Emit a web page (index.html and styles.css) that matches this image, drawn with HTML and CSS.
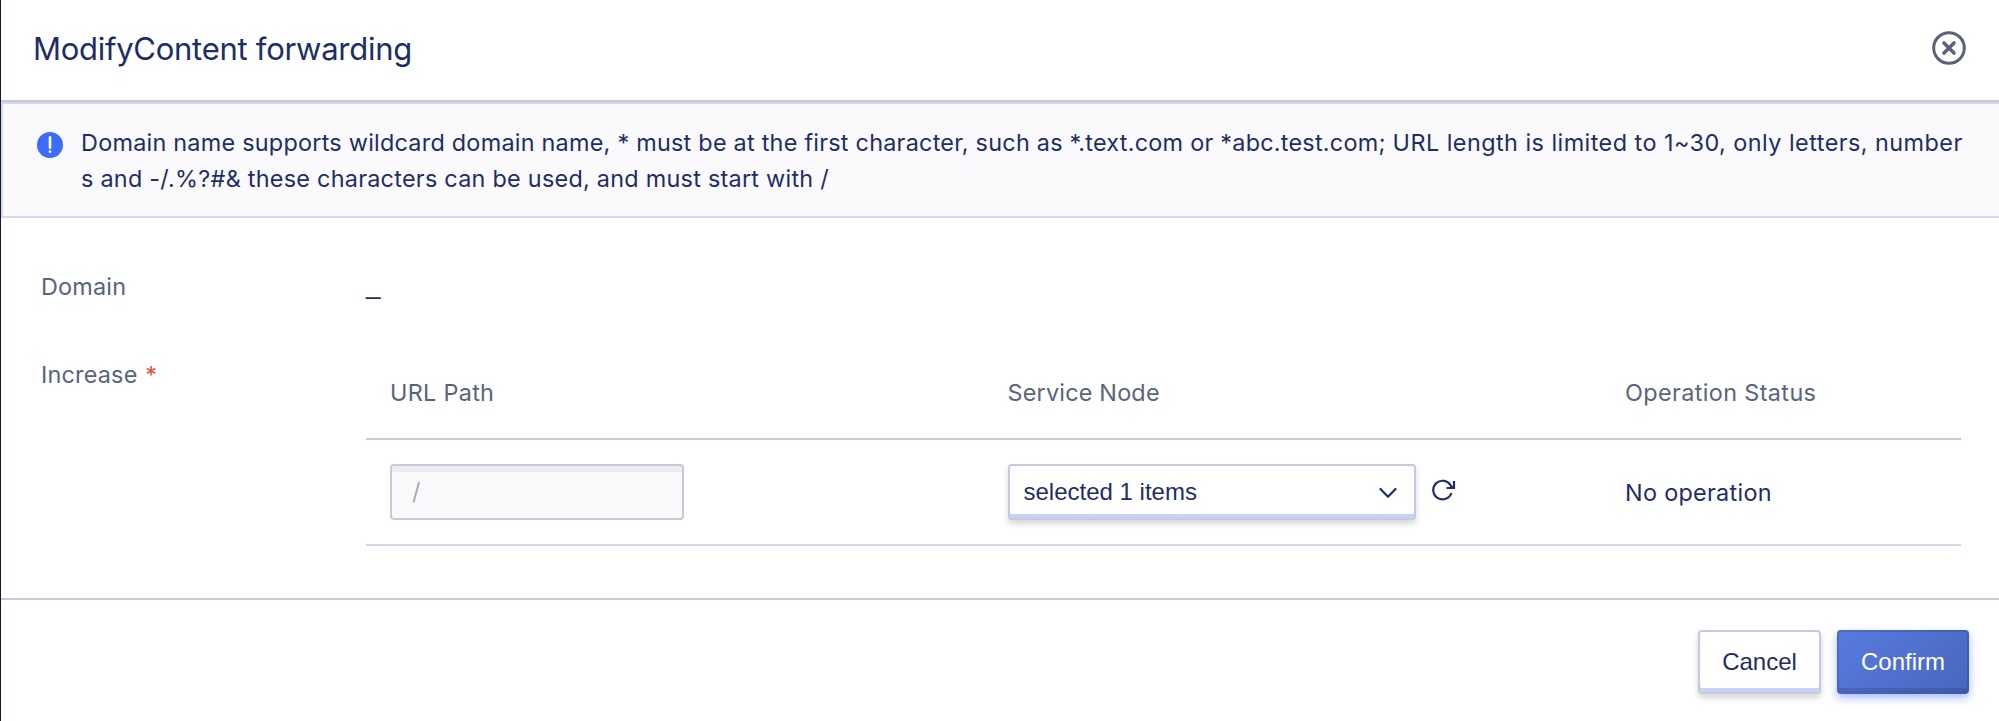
FILE: index.html
```html
<!DOCTYPE html>
<html lang="en">
<head>
<meta charset="utf-8">
<title>Modify content forwarding</title>
<link rel="stylesheet" href="styles.css">
</head>
<body>
<section class="dialog">
  <header class="dialog-header">
    <h1 class="title">ModifyContent forwarding</h1>
    <svg class="close" viewBox="0 0 34 34"><circle cx="17" cy="17" r="15.3"/><path d="M12 12l10 10M22 12L12 22"/></svg>
  </header>
  <div class="notice">
    <svg class="info" viewBox="0 0 26 26"><circle cx="13" cy="13" r="13"/><path d="M13 5.4v10.4"/><path d="M13 19.6v.2"/></svg>
    <p class="notice-text"><span class="rule-domain">Domain name supports wildcard domain name, * must be at the first character, such as *.text.com or *abc.test.com; </span><span class="rule-url">URL length is limited to 1~30, only letters, number</span><br><span class="line-2">s and -/.%?#&amp; these characters can be used, and must start with /</span></p>
  </div>
  <main class="form">
    <div class="row row-domain"><div class="label">Domain</div><div class="value">_</div></div>
    <div class="row row-increase">
      <div class="label">Increase <span class="required">*</span></div>
      <div class="table">
        <div class="tr head"><div>URL Path</div><div><span class="h-service">Service Node</span></div><div><span class="h-status">Operation Status</span></div></div>
        <div class="tr body">
          <div><div class="input">/</div></div>
          <div class="node">
            <div class="select"><span>selected 1 items</span><svg class="chevron" viewBox="0 0 18 12"><path d="M1.500 2L9 9.700l7.500-7.700"/></svg></div>
            <svg class="refresh" viewBox="0 0 24 24"><path d="M19.400 15A9.300 9.300 0 1 1 18.800 7.700L21 9.800"/><path d="M22 3v7h-7.500"/></svg>
          </div>
          <div><span class="no-op">No operation</span></div>
        </div>
      </div>
    </div>
  </main>
  <footer class="footer">
    <button class="btn cancel">Cancel</button>
    <button class="btn confirm">Confirm</button>
  </footer>
</section>
</body>
</html>
```
FILE: styles.css
```css
* { box-sizing: border-box; }
body { margin: 0; background: #fff; color: #1f2d66; font: 23.4px/36px Inter, sans-serif; letter-spacing: .3px; }
.dialog { height: 721px; border-left: 1px solid #12163a; display: flex; flex-direction: column; overflow: hidden; background: #fff; }
.dialog-header { height: 102px; border-bottom: 2px solid #c5cadb; display: flex; align-items: center; justify-content: space-between; padding: 0 33px 4px 32px; }
.title { margin: 2px 0 0; font-size: 31px; line-height: 40px; font-weight: 400; letter-spacing: -.27px; white-space: nowrap; }
.close { width: 34px; height: 34px; fill: none; stroke: #566379; stroke-width: 3; }
.close path { stroke-width: 3.6; stroke-linecap: round; }
.notice { height: 116px; border: 2px solid #d3d7ea; border-right: 0; background: #fafafd; display: flex; padding: 21px 0 0 34px; }
.info { width: 26px; height: 26px; margin-top: 7px; flex: none; fill: #3d6bfa; stroke: none; }
.info path { stroke: #fff; stroke-width: 2.6; stroke-linecap: round; }
.notice-text { margin: 0 0 0 18px; white-space: nowrap; }
.rule-domain { letter-spacing: .245px; }
.rule-url { letter-spacing: .46px; }
.line-2 { letter-spacing: .26px; }
.form { height: 382px; border-bottom: 2px solid #c5c9dc; padding: 51px 38px 0 40px; }
.row { display: flex; }
.row-domain { height: 88px; }
.value { font: 26px/32px "Liberation Sans", sans-serif; }
.label { width: 325px; flex: none; color: #58657b; letter-spacing: .2px; }
.required { color: #e5503f; margin-left: 1px; }
.table { flex: 1; margin-top: -2px; }
.tr { display: grid; grid-template-columns: 617.5px 617.5px 1fr; align-items: center; }
.tr > div { padding-left: 24px; }
.head { height: 85px; border-bottom: 2px solid #c5c9dc; color: #58657b; padding-bottom: 8px; }
.h-service { letter-spacing: .2px; }
.h-status { letter-spacing: .38px; }
.body { height: 106px; border-bottom: 2px solid #d3d7ea; }
.no-op { position: relative; top: 1px; }
.input { width: 294px; height: 56px; border: 2px solid #c5c9dc; border-radius: 4px; background: #fafafd; box-shadow: inset 0 6px #ececee; color: #a9a9ad; padding: 8px 20px; }
.node { display: flex; align-items: center; }
.select { width: 408px; height: 56px; border: 2px solid #c5c9dc; border-radius: 4px; background: #fff; box-shadow: inset 0 -4px #c5d3f6, 0 4px 6px rgba(0,0,0,.16); display: flex; align-items: center; justify-content: space-between; padding: 0 17px 0 14px; font: 24px/36px "Liberation Sans", sans-serif; letter-spacing: 0; }
.chevron { width: 18px; height: 12px; margin-top: 2px; fill: none; stroke: #1f2d66; stroke-width: 2.2; stroke-linecap: round; stroke-linejoin: round; }
.refresh { width: 24px; height: 24px; margin: 0 0 4px 16px; fill: none; stroke: #1f2d66; stroke-width: 2.2; }
.footer { flex: 1; display: flex; gap: 16px; justify-content: flex-end; padding: 30px 30px 0 0; }
.btn { height: 64px; padding: 0 0 1px; border: 2px solid #c5c9dc; border-radius: 4px; font: 24px/36px "Liberation Sans", sans-serif; background: #fff; color: #1f2d66; }
.cancel { width: 123px; box-shadow: inset 0 -4px #c5d3f6, 0 4px 6px rgba(0,0,0,.16); }
.confirm { width: 132px; color: #fff; border-color: rgba(0,0,0,.12); background: linear-gradient(135deg, #587be0, #4766bd) border-box; box-shadow: inset 0 -4px rgba(0,0,0,.12), 0 4px 8px rgba(61,107,250,.45); }
```
